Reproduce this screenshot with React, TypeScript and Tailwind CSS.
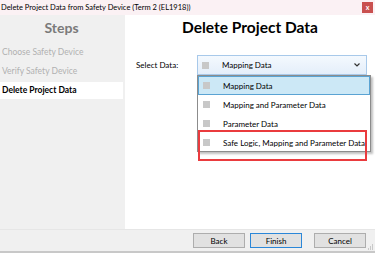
import React from "react";

const items = [
  "Mapping Data",
  "Mapping and Parameter Data",
  "Parameter Data",
  "Safe Logic, Mapping and Parameter Data",
];

function Box() {
  return <span className="block w-[7px] h-[7px] bg-[#c8c8c8] shrink-0" />;
}

export default function App() {
  return (
    <div
      className="w-[375px] h-[253px] flex flex-col bg-white overflow-hidden text-black"
      style={{ fontFamily: 'Lato, "Noto Sans", sans-serif' }}
    >
      {/* title bar */}
      <div className="h-[15px] bg-[#fbf1f4] flex items-center justify-between shrink-0">
        <span className="text-[7.5px] leading-none pl-[1px] whitespace-nowrap">
          Delete Project Data from Safety Device (Term 2 (EL1918))
        </span>
        <span className="w-[11px] h-[11px] mr-[2px] bg-[#c9504f] text-white text-[7px] leading-none flex items-center justify-center font-bold">
          x
        </span>
      </div>

      {/* body */}
      <div className="flex flex-1 min-h-0">
        <div className="w-[125px] bg-[#f0f0f0] flex flex-col pr-[2px] shrink-0">
          <div className="h-[29px] flex items-center justify-center pb-[3px]">
            <span className="text-[14px] font-bold text-[#7a7a7a] leading-none">Steps</span>
          </div>
          <div className="flex flex-col gap-[2px]">
            <div className="h-[17px] flex items-center pl-[2px] text-[8.5px] text-[#b0b0b0]">Choose Safety Device</div>
            <div className="h-[17px] flex items-center pl-[2px] text-[8.5px] text-[#b0b0b0]">Verify Safety Device</div>
            <div className="h-[17px] flex items-center pl-[2px] text-[8.5px] font-bold bg-white">Delete Project Data</div>
          </div>
        </div>

        <div className="flex-1 relative bg-white">
          <div className="h-[26px] flex items-center justify-center">
            <span className="text-[15.5px] font-bold leading-none">Delete Project Data</span>
          </div>
          <div className="flex items-center mt-[14px] pl-[11px]">
            <span className="text-[8px] w-[61px]">Select Data:</span>
            <div className="w-[170px] h-[20px] border border-[#a8c9ea] bg-gradient-to-b from-[#f4f9fe] to-[#e4eefa] flex items-center pl-[4px] pr-[6px]">
              <Box />
              <span className="text-[8px] ml-[13px] flex-1">Mapping Data</span>
              <svg width="6" height="4" viewBox="0 0 6 4">
                <path d="M0.5 0.5 L3 3 L5.5 0.5" stroke="#333" strokeWidth="1.2" fill="none" />
              </svg>
            </div>
          </div>

          {/* dropdown list */}
          <div className="absolute left-[72px] top-[60px] w-[174px] h-[77px] bg-white border border-[#8c8c8c] shadow-[2px_2px_2px_rgba(0,0,0,0.25)] flex flex-col">
            {items.map((t, i) => (
              <div
                key={t}
                className={
                  "h-[19px] flex items-center pl-[4px] shrink-0 " +
                  (i === 0 ? "bg-[#cce8f6] border border-[#5aa3d3]" : "border border-transparent")
                }
              >
                <Box />
                <span className="text-[8px] ml-[13px] whitespace-nowrap">{t}</span>
              </div>
            ))}
          </div>

          {/* red highlight */}
          <div className="absolute left-[73px] top-[115px] w-[169px] h-[31px] border-2 border-[#ea3b3e]" />
        </div>
      </div>

      {/* bottom bar */}
      <div className="h-[24px] bg-[#f0f0f0] border-t border-[#e6e6e6] border-b-2 border-b-[#c8c8c8] flex items-start pt-[3px] shrink-0 relative">
        <div className="ml-[193px] w-[52px] h-[15px] bg-[#e1e1e1] border border-[#adadad] flex items-center justify-center text-[8px]">Back</div>
        <div className="ml-[5px] w-[52px] h-[15px] bg-[#e1e1e1] border border-[#2b87d8] flex items-center justify-center text-[8px]">Finish</div>
        <div className="ml-[12px] w-[52px] h-[15px] bg-[#e1e1e1] border border-[#adadad] flex items-center justify-center text-[8px]">Cancel</div>
        <svg className="absolute right-[1px] bottom-[1px]" width="6" height="6" viewBox="0 0 6 6">
          <rect x="4" y="0" width="1" height="6" fill="#c8c8c8" />
          <rect x="2" y="2" width="1" height="4" fill="#c8c8c8" />
          <rect x="0" y="4" width="1" height="2" fill="#c8c8c8" />
        </svg>
      </div>
    </div>
  );
}
